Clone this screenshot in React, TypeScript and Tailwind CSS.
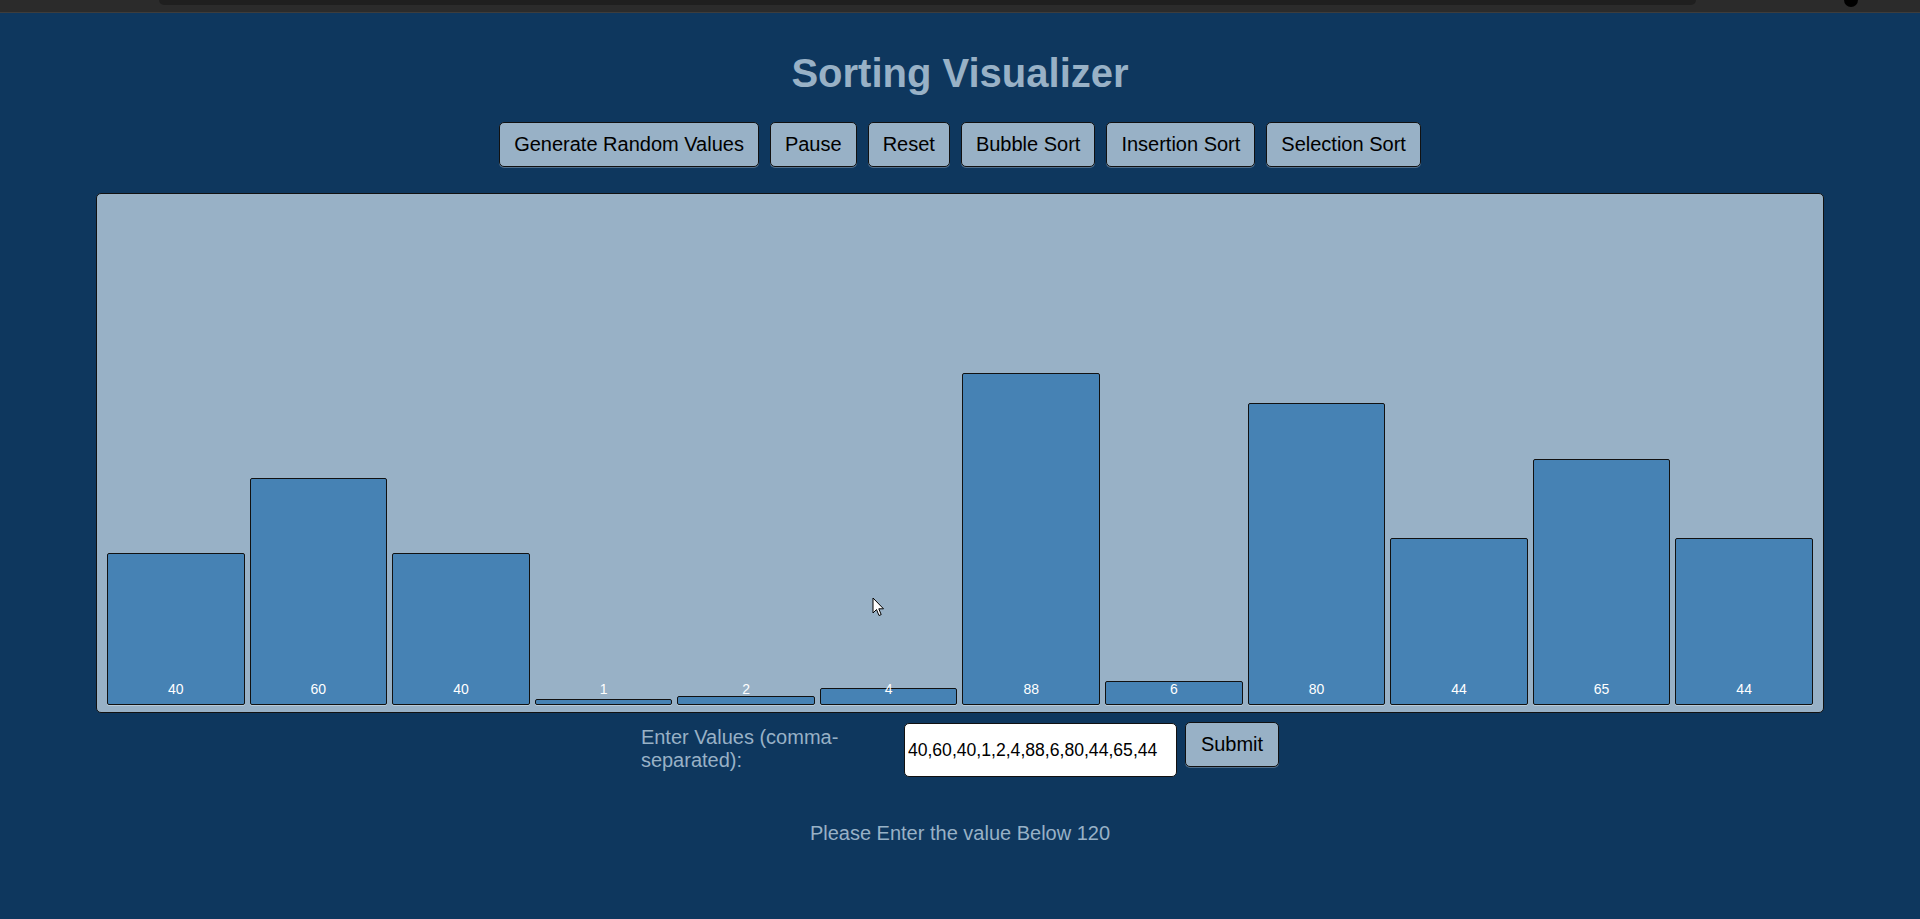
import React, { useState } from 'react';

const initialValues = [40, 60, 40, 1, 2, 4, 88, 6, 80, 44, 65, 44];

const btn =
  "px-[14px] py-[10px] text-[20px] leading-[23px] bg-[#98b1c6] text-black border border-[#111] rounded-[5px] shadow-[0_1px_0_#4f6f8e]";

export default function App() {
  const [values, setValues] = useState<number[]>(initialValues);
  const [input, setInput] = useState(initialValues.join(","));

  const submit = () => {
    const parsed = input
      .split(",")
      .map((v) => parseInt(v.trim(), 10))
      .filter((v) => !isNaN(v) && v < 120);
    if (parsed.length) setValues(parsed);
  };

  return (
    <div className="relative min-h-screen bg-[#0e375e] font-['Liberation_Sans',Arial,sans-serif]">
      {/* browser chrome strip */}
      <div className="h-[13px] bg-[#2b2b2b] border-b border-[#3d3d3d] flex">
        <div className="ml-[159px] w-[1537px] h-[5px] bg-[#1f1f1f] rounded-b-[6px]" />
        <div className="ml-auto mr-[62px] w-[14px] h-[7px] rounded-b-full bg-black" />
      </div>

      <h1 className="text-center text-[40px] leading-[46px] font-bold text-[#98b1c6] mt-[37px]">
        Sorting Visualizer
      </h1>

      {/* controls */}
      <div className="flex justify-center gap-[11px] mt-[26px]">
        <button className={btn}>Generate Random Values</button>
        <button className={btn}>Pause</button>
        <button className={btn}>Reset</button>
        <button className={btn}>Bubble Sort</button>
        <button className={btn}>Insertion Sort</button>
        <button className={btn}>Selection Sort</button>
      </div>

      {/* bars */}
      <div className="mx-auto mt-[26px] w-[90%] h-[520px] pt-[10px] px-[10px] pb-[7px] bg-[#98b1c6] border border-[#111] rounded-[5px] flex items-end gap-[5px]">
        {values.map((v, i) => (
          <div
            key={i}
            className="relative flex-1 bg-[#4682b4] border border-[#111] rounded-[2px] shadow-[0_1px_0_#b9cbd9]"
            style={{ height: v * 3.75 + 2 }}
          >
            <span className="absolute bottom-[7px] left-0 right-0 text-center text-white text-[14px] leading-[16px]">
              {v}
            </span>
          </div>
        ))}
      </div>

      {/* input row */}
      <div className="flex justify-center items-start mt-[10px]">
        <label className="w-[253px] mr-[10px] mt-[3px] text-[20px] leading-[23px] text-[#98b1c6]">
          Enter Values (comma-separated):
        </label>
        <input
          className="w-[273px] h-[54px] px-[3px] text-[17.6px] bg-white text-black border border-[#111] rounded-[5px] outline-none"
          value={input}
          onChange={(e) => setInput(e.target.value)}
        />
        <button className={btn + " px-[15px] ml-[8px] -mt-[1px]"} onClick={submit}>
          Submit
        </button>
      </div>

      <p className="text-center text-[20px] leading-[23px] text-[#98b1c6] mt-[45px]">
        Please Enter the value Below 120
      </p>

      {/* mouse pointer captured in the screenshot */}
      <svg
        className="absolute left-[872px] top-[597px] pointer-events-none"
        width="13"
        height="20"
        viewBox="0 0 13 20"
      >
        <path
          d="M1 1 L1 16 L4.5 12.5 L7 18.5 L9.2 17.6 L6.8 11.8 L11.5 11.8 Z"
          fill="#fff"
          stroke="#000"
          strokeWidth="1"
          strokeLinejoin="round"
        />
      </svg>
    </div>
  );
}
